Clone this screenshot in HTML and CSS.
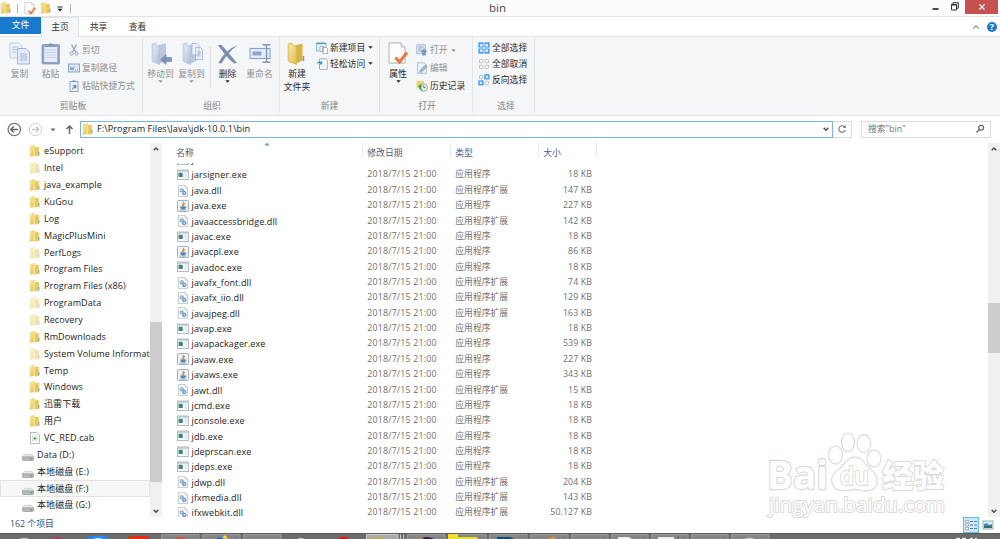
FILE: index.html
```html
<!DOCTYPE html>
<html lang="zh-CN">
<head>
<meta charset="utf-8">
<title>bin</title>
<link rel="stylesheet" href="styles.css">
</head>
<body>
<svg class="defs" aria-hidden="true">
  <defs>
    <linearGradient id="gold" x1="0" x2="1" y1="0" y2="1"><stop offset="0" stop-color="#fbefb0"/><stop offset="1" stop-color="#dfb945"/></linearGradient>
    <linearGradient id="steel" x1="0" x2="1" y1="0" y2="1"><stop offset="0" stop-color="#eaf0f8"/><stop offset="1" stop-color="#a9bbd6"/></linearGradient>
    <symbol id="folder" viewBox="0 0 12 12"><path d="M1.2 1.3 5.6.5V10.6L1.2 11.4Z" fill="url(#gold)" stroke="#dcbd55" stroke-width=".4"/><path d="M5.6 2.2 9.8 1.8V10.9L5.8 11.5 4.4 10Z" fill="#e8c95f"/><path d="M4.2 1.5 6 .6V9.6L7 11.4 4.3 10.8Z" fill="#f4df8b"/><path d="M9.9 6.8v3.6" stroke="#6d9fba" stroke-width="1"/></symbol>
    <symbol id="exe" viewBox="0 0 12 12"><rect x=".5" y="1" width="11" height="9.6" fill="#f7f9fa" stroke="#a5adb4" stroke-width=".8"/><rect x=".6" y="1" width="10.8" height="1.7" fill="#bfc7cd"/><rect x="1.7" y="3.8" width="4" height="4.2" fill="#3c7d80"/><rect x="1.7" y="3.8" width="1.6" height="4.2" fill="#4c9a70"/><path d="M7.5 4h2.8M7.5 6h2.8M7.5 8h2.8" stroke="#cfdae2" stroke-width=".9"/></symbol>
    <symbol id="dll" viewBox="0 0 12 12"><path d="M1.5.5H8L10.5 3V11.5H1.5Z" fill="#fafbfc" stroke="#b5bac0" stroke-width=".7"/><path d="M8 .5V3h2.5" fill="none" stroke="#b5bac0" stroke-width=".6"/><circle cx="4.7" cy="5.3" r="1.5" fill="#d5e5f5" stroke="#6590bf" stroke-width="1.2" stroke-dasharray="1 .3"/><circle cx="7.3" cy="8" r="1.6" fill="#c5daf0" stroke="#4f7fb5" stroke-width="1.2" stroke-dasharray="1 .3"/></symbol>
    <symbol id="java" viewBox="0 0 12 12"><rect x=".5" y=".5" width="11" height="11" rx=".8" fill="#eef3f7" stroke="#8fa2b3" stroke-width=".8"/><path d="M6.3 1.8C7.4 3 4.6 4 5.8 6M7.8 3.3C5.8 4.2 7.5 5 6.4 6.3" fill="none" stroke="#e38a3c" stroke-width="1.1"/><path d="M3.6 6.8h4.8L7.6 9H4.4ZM2.8 10h6.4" fill="#5685ad" stroke="#5685ad" stroke-width=".7"/><path d="M8.3 6.8c1.6 0 1.3 1.3-.4 1.5" fill="none" stroke="#5685ad" stroke-width=".6"/></symbol>
    <symbol id="cab" viewBox="0 0 12 12"><path d="M1.5.5H8L10.5 3V11.5H1.5Z" fill="#fcfcfc" stroke="#a8a8a8" stroke-width=".8"/><rect x="3.4" y="4" width="5" height="4.8" fill="#edf5ed" stroke="#c5d3c5" stroke-width=".5"/><path d="M5.9 5v3M4.4 6.5h3" stroke="#4aa25b" stroke-width="1"/></symbol>
    <symbol id="drive" viewBox="0 0 12 12"><path d="M2.3 4.3H9.8L11.6 7H.4Z" fill="#e6e7e9" stroke="#b8babd" stroke-width=".5"/><path d="M.4 7H11.6V9.6Q11.6 10.4 10.8 10.4H1.2Q.4 10.4.4 9.6Z" fill="#b9bbbe" stroke="#85888c" stroke-width=".6"/><rect x="8.2" y="8.2" width="2" height="1.2" fill="#48b548"/></symbol>
    <symbol id="page-check" viewBox="0 0 20 23"><path d="M1 1H13L17 5V21H1Z" fill="#fdfdfd" stroke="#a5a9ae" stroke-width=".9"/><path d="M13 1V5h4" fill="#e8eaec" stroke="#a5a9ae" stroke-width=".7"/><path d="M7.5 15.5 11.5 20 19 10.5" fill="none" stroke="#e77b45" stroke-width="3.2"/></symbol>
    <symbol id="pages" viewBox="0 0 22 23"><g fill="#eef3fa" stroke="#b4c3dc" stroke-width=".8"><path d="M1 1H10L13 4V16H1Z"/><path d="M8.5 6.5H17L20.5 10V22H8.5Z" fill="#e2ebf7" stroke="#91a5c8"/></g><path d="M3.5 5h6M3.5 7.5h4M3.5 10h4M11 12h7M11 14h7M11 16h7M11 18h7" stroke="#9db2d4" stroke-width=".9"/></symbol>
    <symbol id="clipboard" viewBox="0 0 20 23"><rect x="1" y="2.5" width="17.5" height="19.5" rx="1" fill="#91a3c6" stroke="#8396ba" stroke-width=".7"/><rect x="3.2" y="5" width="13" height="15" fill="#e4edf8"/><path d="M4.5 8h10.5M4.5 10.5h10.5M4.5 13h10.5M4.5 15.5h10.5" stroke="#bccce3" stroke-width=".8"/><path d="M6 5V2.5H8Q9.8-.7 11.5 2.5H13.5V5Z" fill="#8797b7"/></symbol>
    <symbol id="bigfolder" viewBox="0 0 22 23"><path d="M2 2 6 .8V20L2 19Z" fill="#f4dc84" stroke="#d7b350" stroke-width=".5"/><path d="M8 3.5 16.5 1.8V18.5L11 21Z" fill="#dbb246"/><path d="M3 1.5 10.7 5V22.5L3 20Z" fill="url(#gold)" stroke="#d3ae48" stroke-width=".5"/><path d="M17.500 14v5" stroke="#7a9db6" stroke-width="1.4"/></symbol>
    <symbol id="steelfolder" viewBox="0 0 22 23"><path d="M2 2 6 .8V20L2 19Z" fill="#dce5f2" stroke="#b0bfd7" stroke-width=".5"/><path d="M8 3.5 15.5 1.8V18.5L10 21Z" fill="#bac9e0" stroke="#a8b8d0" stroke-width=".5"/><path d="M3 1.5 9.7 5V22.5L3 20Z" fill="url(#steel)" stroke="#a8b8d0" stroke-width=".5"/></symbol>
    <symbol id="caret" viewBox="0 0 5 3"><path d="M.3.2H4.7L2.5 2.8Z" fill="currentColor"/></symbol>
    <symbol id="up" viewBox="0 0 12 12"><path d="M3.700 7.300 6 5 8.300 7.300" fill="none" stroke="#505050" stroke-width="1.5"/></symbol>
    <symbol id="down" viewBox="0 0 12 12"><path d="M3.700 4.900 6 7.200 8.300 4.900" fill="none" stroke="#505050" stroke-width="1.5"/></symbol>
  </defs>
</svg>

<div class="window">
  <header class="titlebar">
    <div class="quick">
      <svg class="i12"><use href="#folder"/></svg><i class="qsep"></i>
      <svg class="qpage"><use href="#page-check"/></svg>
      <svg class="i12"><use href="#folder"/></svg>
      <svg class="qmenu" viewBox="0 0 6 6"><path d="M.5 1h5" stroke="#222"/><path d="M.5 2.8h5L3 5.5Z" fill="#222"/></svg><i class="qsep"></i>
    </div>
    <h1 class="title">bin</h1>
    <div class="controls">
      <svg class="win-icons" viewBox="0 0 35 14"><path d="M2.500 9h6" stroke="#222" stroke-width="1.600"/><path d="M21.500 4.500h5v5.500h-5zM21 5h6M23 4V2.700h5.300V8.200H27" fill="none" stroke="#333" stroke-width="1"/></svg>
      <span class="close"><svg viewBox="0 0 8 8"><path d="M1.400 1.400 6.600 6.600M6.600 1.400 1.400 6.600" stroke="#fff" stroke-width="1.300"/></svg></span>
    </div>
  </header>

  <nav class="tabs">
    <span class="tab file">文件</span><span class="tab active">主页</span><span class="tab">共享</span><span class="tab">查看</span>
    <div class="tabs-right">
      <svg class="chev" viewBox="0 0 8 6"><path d="M1.200 4.700 4 1.800 6.800 4.700" fill="none" stroke="#8b8b8b" stroke-width="1.200"/></svg>
      <span class="help">?</span>
    </div>
  </nav>

  <section class="ribbon">
    <div class="group g-clip">
      <div class="tools">
        <div class="big off"><svg class="bi"><use href="#pages"/></svg><span>复制</span></div>
        <div class="big off"><svg class="bi"><use href="#clipboard"/></svg><span>粘贴</span></div>
        <div class="stack">
          <div class="small off"><svg class="si" viewBox="0 0 12 12"><path d="M3.500.5 7.500 8M8.500.5 4.500 8" stroke="#8ea2c6" stroke-width="1.300"/><circle cx="3.500" cy="9.500" r="1.600" fill="none" stroke="#8ea2c6"/><circle cx="8.500" cy="9.500" r="1.600" fill="none" stroke="#8ea2c6"/></svg>剪切</div>
          <div class="small off"><svg class="si" viewBox="0 0 12 12"><rect x=".5" y="2" width="11" height="8" fill="#dbe6f5" stroke="#8fa4c9"/><path d="M2 4.500 3 8 4 5.500 5 8 6 4.500M7 7.800h1M9 7.800h1" fill="none" stroke="#7187b3" stroke-width=".8"/></svg>复制路径</div>
          <div class="small off"><svg class="si" viewBox="0 0 12 12"><rect x="2" y="1.500" width="8" height="10" fill="#edf3fb" stroke="#8fa4c9"/><path d="M4.500 1.300h3" stroke="#7187b3" stroke-width="1.500"/><path d="M4.300 9 7.400 6M4.800 5.500h3v3" fill="none" stroke="#7187b3" stroke-width="1.100"/></svg>粘贴快捷方式</div>
        </div>
      </div>
      <div class="caption">剪贴板</div>
    </div>
    <div class="group g-org">
      <div class="tools">
        <div class="big off"><svg class="bi" viewBox="0 0 22 23"><use href="#steelfolder"/><path d="M10.500 17.500 16 12.500V15.500H21.500V19.500H16V22.500Z" fill="#8195bb" stroke="#6d82ab" stroke-width=".6"/></svg><span>移动到</span><svg class="caret"><use href="#caret"/></svg></div>
        <div class="big off"><svg class="bi" viewBox="0 0 22 23"><use href="#steelfolder"/><path d="M11 1.500h5l2 2V13h-7ZM14.500 5.500h5l2 2v10h-7Z" fill="#edf3fb" stroke="#9fb1cf" stroke-width=".8"/><path d="M16 10h4M16 12h4M16 14h4" stroke="#9fb1cf" stroke-width=".8"/></svg><span>复制到</span><svg class="caret"><use href="#caret"/></svg></div>
        <i class="vsep"></i>
        <div class="big del"><svg class="bi" viewBox="0 0 22 23"><path d="M1 3.500Q4 2 5.500 4 9 8 12 11.500T20 21L17 21.500Q12 17.500 8.500 13T1 3.500Z" fill="#7d8fae"/><path d="M21 3Q15 7 11 12T4.500 21.500L1.500 21Q4 15 9.500 10T21 3Z" fill="#7d8fae"/></svg><span>删除</span><svg class="caret"><use href="#caret"/></svg></div>
        <div class="big off"><svg class="bi" viewBox="0 0 22 23"><rect x="1" y="6.500" width="20" height="10" fill="#e5edf8" stroke="#8da2c7" stroke-width="1.100"/><rect x="3.500" y="9.500" width="9" height="4" fill="#8fa4c8"/><path d="M13.500 2.800h3l1 1 1-1h3M13.500 20.300h3l1-1 1 1h3M17.500 3.500v16" fill="none" stroke="#8196bd" stroke-width="1.400"/></svg><span>重命名</span></div>
      </div>
      <div class="caption">组织</div>
    </div>
    <div class="group g-new">
      <div class="tools">
        <div class="big"><svg class="bi"><use href="#bigfolder"/></svg><span>新建<br>文件夹</span></div>
        <div class="stack tight">
          <div class="small"><svg class="si" viewBox="0 0 12 12"><rect x=".5" y="1" width="9.500" height="8" fill="#e5f1f8" stroke="#87aec5" stroke-width=".8"/><path d="M.5 1.500H10" stroke="#4f9fc9" stroke-width="1.400"/><path d="M4 4.500h3.500v5H4ZM6.500 5.500h4l1 1v5h-5Z" fill="#fff" stroke="#8499a8" stroke-width=".7"/></svg>新建项目<svg class="caret"><use href="#caret"/></svg></div>
          <div class="small"><svg class="si" viewBox="0 0 12 12"><path d="M3.500.8H10L11.300 2.200V11.300H3.500Z" fill="#fff" stroke="#8e969e" stroke-width=".8"/><path d="M.3 5.800Q2 2.500 5 3.800L6.300 2.400V6.500H2.800L4 5.200Q2.200 4.500.3 5.800" fill="#3f8fd6"/><path d="M5 8h4.500" stroke="#c2c8ce" stroke-width=".7"/></svg>轻松访问<svg class="caret"><use href="#caret"/></svg></div>
        </div>
      </div>
      <div class="caption">新建</div>
    </div>
    <div class="group g-open">
      <div class="tools">
        <div class="big"><svg class="bi"><use href="#page-check"/></svg><span>属性</span><svg class="caret"><use href="#caret"/></svg></div>
        <div class="stack">
          <div class="small off"><svg class="si" viewBox="0 0 12 12"><rect x=".8" y=".8" width="8.500" height="9" fill="#dde6f3" stroke="#a0b2ce" stroke-width=".8"/><path d="M2.500 3h5M2.500 5h3M2.500 7h3" stroke="#8ba0c4" stroke-width=".9"/><path d="M8 4.300 11.500 8H9.800v3.500H6.200V8H4.500Z" fill="#8297bf"/></svg>打开<svg class="caret"><use href="#caret"/></svg></div>
          <div class="small off"><svg class="si" viewBox="0 0 12 12"><path d="M1.500.8H8L10.300 3V11.300H1.500Z" fill="#eef3fa" stroke="#9fb2cf" stroke-width=".8"/><path d="M3.500 10.500 4.200 8 9.800 2.800 11.300 4.500 6 9.800Z" fill="#a4b7d5" stroke="#8197bd" stroke-width=".6"/></svg>编辑</div>
          <div class="small"><svg class="si" viewBox="0 0 12 12"><path d="M.5 1 4 .4 8 1.500V8L3 8.500.5 7.500Z" fill="#efd675"/><circle cx="7.800" cy="7.500" r="3.800" fill="#f2f6f2" stroke="#87938a" stroke-width=".8"/><path d="M7.800 5v2.700h2" fill="none" stroke="#555" stroke-width=".8"/><path d="M1.500 7 4.500 4 6.500 6.800H5Q5 9.200 7 10.500 3 10.500 3 7Z" fill="#35ad3c"/></svg>历史记录</div>
        </div>
      </div>
      <div class="caption">打开</div>
    </div>
    <div class="group g-sel">
      <div class="tools">
        <div class="stack tight">
          <div class="small"><svg class="si" viewBox="0 0 12 12"><path d="M.3.3h11.400v11.400H.3z" fill="#4da3ef"/><path d="M2 2h2.600v2.600H2zM7.400 2H10v2.600H7.400zM2 7.400h2.600V10H2zM7.400 7.400H10V10H7.400z" fill="#d8edff"/><path d="M6 0v12M0 6h12" stroke="#f5f6f7" stroke-width=".8"/></svg>全部选择</div>
          <div class="small"><svg class="si" viewBox="0 0 12 12"><g fill="#fff" stroke="#a8adb2" stroke-width=".8"><rect x="1.500" y="1.500" width="3.300" height="3.300" rx=".8"/><rect x="7.200" y="1.500" width="3.300" height="3.300" rx=".8"/><rect x="1.500" y="7.200" width="3.300" height="3.300" rx=".8"/><rect x="7.200" y="7.200" width="3.300" height="3.300" rx=".8"/></g></svg>全部取消</div>
          <div class="small"><svg class="si" viewBox="0 0 12 12"><g fill="#fff" stroke="#a8adb2" stroke-width=".8"><rect x="1.500" y="1.500" width="3.300" height="3.300" rx=".8"/><rect x="7.200" y="7.200" width="3.300" height="3.300" rx=".8"/></g><path d="M7 1h3.800v3.800H7zM1 7h3.800v3.800H1z" fill="#d8edff" stroke="#4da3ef" stroke-width="1.600"/></svg>反向选择</div>
        </div>
      </div>
      <div class="caption">选择</div>
    </div>
  </section>

  <section class="addressbar">
    <svg class="navs" viewBox="0 0 80 24"><g fill="none"><circle cx="14.300" cy="12.500" r="6.200" stroke="#777" stroke-width="1.300"/><path d="M18 12.500H11M13.800 9.500 10.800 12.500 13.800 15.500" stroke="#666" stroke-width="1.500"/><circle cx="35.500" cy="12.500" r="6.200" stroke="#cfcfcf"/><path d="M32 12.500h6.500M36 9.700 38.800 12.500 36 15.300" stroke="#c8c8c8" stroke-width="1.300"/><path d="M69.500 17V9.500M66.500 12 69.500 9 72.500 12" stroke="#666" stroke-width="1.500"/></g><path d="M50.500 11.500h5L53 14.300Z" fill="#666"/></svg>
    <div class="path"><svg class="i12"><use href="#folder"/></svg><span>F:\Program Files\Java\jdk-10.0.1\bin</span><svg class="i12 drop"><use href="#down"/></svg></div>
    <div class="refresh"><svg viewBox="0 0 12 12"><path d="M9 4.300A3.300 3.300 0 1 0 9.300 7" fill="none" stroke="#777" stroke-width="1.100"/><path d="M9.800 2v3H6.800Z" fill="#777"/></svg></div>
    <div class="search"><span>搜索"bin"</span><svg viewBox="0 0 12 12"><circle cx="7.200" cy="4.800" r="2.400" fill="none" stroke="#666" stroke-width="1.200"/><path d="M5.400 6.600 2.500 9.500" stroke="#666" stroke-width="1.400"/></svg></div>
  </section>

  <main class="content">
    <aside class="tree">
      <div class="node"><svg><use href="#folder"/></svg>eSupport</div>
      <div class="node pale"><svg><use href="#folder"/></svg>Intel</div>
      <div class="node"><svg><use href="#folder"/></svg>java_example</div>
      <div class="node"><svg><use href="#folder"/></svg>KuGou</div>
      <div class="node"><svg><use href="#folder"/></svg>Log</div>
      <div class="node"><svg><use href="#folder"/></svg>MagicPlusMini</div>
      <div class="node pale"><svg><use href="#folder"/></svg>PerfLogs</div>
      <div class="node"><svg><use href="#folder"/></svg>Program Files</div>
      <div class="node"><svg><use href="#folder"/></svg>Program Files (x86)</div>
      <div class="node pale"><svg><use href="#folder"/></svg>ProgramData</div>
      <div class="node pale"><svg><use href="#folder"/></svg>Recovery</div>
      <div class="node"><svg><use href="#folder"/></svg>RmDownloads</div>
      <div class="node pale"><svg><use href="#folder"/></svg>System Volume Informat</div>
      <div class="node"><svg><use href="#folder"/></svg>Temp</div>
      <div class="node"><svg><use href="#folder"/></svg>Windows</div>
      <div class="node"><svg><use href="#folder"/></svg>迅雷下载</div>
      <div class="node"><svg><use href="#folder"/></svg>用户</div>
      <div class="node"><svg><use href="#cab"/></svg>VC_RED.cab</div>
      <div class="node disk"><svg><use href="#drive"/></svg>Data (D:)</div>
      <div class="node disk"><svg><use href="#drive"/></svg>本地磁盘 (E:)</div>
      <div class="node disk selected"><svg><use href="#drive"/></svg>本地磁盘 (F:)</div>
      <div class="node disk"><svg><use href="#drive"/></svg>本地磁盘 (G:)</div>
    </aside>
    <div class="scroll tree-scroll"><svg class="i12"><use href="#up"/></svg><i class="thumb"></i><svg class="i12"><use href="#down"/></svg></div>

    <section class="files">
      <div class="cols head"><span>名称<svg class="sort" viewBox="0 0 6 4"><path d="M.4 3.600 3 .8 5.600 3.600Z" fill="#5b9dbb"/></svg></span><span>修改日期</span><span>类型</span><span>大小</span></div>
      <div class="rows">
        <div class="cols row"><span><svg><use href="#exe"/></svg>jar.exe</span><span>2018/7/15 21:00</span><span>应用程序</span><span>18 KB</span></div>
        <div class="cols row"><span><svg><use href="#exe"/></svg>jarsigner.exe</span><span>2018/7/15 21:00</span><span>应用程序</span><span>18 KB</span></div>
        <div class="cols row"><span><svg><use href="#dll"/></svg>java.dll</span><span>2018/7/15 21:00</span><span>应用程序扩展</span><span>147 KB</span></div>
        <div class="cols row"><span><svg><use href="#java"/></svg>java.exe</span><span>2018/7/15 21:00</span><span>应用程序</span><span>227 KB</span></div>
        <div class="cols row"><span><svg><use href="#dll"/></svg>javaaccessbridge.dll</span><span>2018/7/15 21:00</span><span>应用程序扩展</span><span>142 KB</span></div>
        <div class="cols row"><span><svg><use href="#exe"/></svg>javac.exe</span><span>2018/7/15 21:00</span><span>应用程序</span><span>18 KB</span></div>
        <div class="cols row"><span><svg><use href="#java"/></svg>javacpl.exe</span><span>2018/7/15 21:00</span><span>应用程序</span><span>86 KB</span></div>
        <div class="cols row"><span><svg><use href="#exe"/></svg>javadoc.exe</span><span>2018/7/15 21:00</span><span>应用程序</span><span>18 KB</span></div>
        <div class="cols row"><span><svg><use href="#dll"/></svg>javafx_font.dll</span><span>2018/7/15 21:00</span><span>应用程序扩展</span><span>74 KB</span></div>
        <div class="cols row"><span><svg><use href="#dll"/></svg>javafx_iio.dll</span><span>2018/7/15 21:00</span><span>应用程序扩展</span><span>129 KB</span></div>
        <div class="cols row"><span><svg><use href="#dll"/></svg>javajpeg.dll</span><span>2018/7/15 21:00</span><span>应用程序扩展</span><span>163 KB</span></div>
        <div class="cols row"><span><svg><use href="#exe"/></svg>javap.exe</span><span>2018/7/15 21:00</span><span>应用程序</span><span>18 KB</span></div>
        <div class="cols row"><span><svg><use href="#exe"/></svg>javapackager.exe</span><span>2018/7/15 21:00</span><span>应用程序</span><span>539 KB</span></div>
        <div class="cols row"><span><svg><use href="#java"/></svg>javaw.exe</span><span>2018/7/15 21:00</span><span>应用程序</span><span>227 KB</span></div>
        <div class="cols row"><span><svg><use href="#java"/></svg>javaws.exe</span><span>2018/7/15 21:00</span><span>应用程序</span><span>343 KB</span></div>
        <div class="cols row"><span><svg><use href="#dll"/></svg>jawt.dll</span><span>2018/7/15 21:00</span><span>应用程序扩展</span><span>15 KB</span></div>
        <div class="cols row"><span><svg><use href="#exe"/></svg>jcmd.exe</span><span>2018/7/15 21:00</span><span>应用程序</span><span>18 KB</span></div>
        <div class="cols row"><span><svg><use href="#exe"/></svg>jconsole.exe</span><span>2018/7/15 21:00</span><span>应用程序</span><span>18 KB</span></div>
        <div class="cols row"><span><svg><use href="#exe"/></svg>jdb.exe</span><span>2018/7/15 21:00</span><span>应用程序</span><span>18 KB</span></div>
        <div class="cols row"><span><svg><use href="#exe"/></svg>jdeprscan.exe</span><span>2018/7/15 21:00</span><span>应用程序</span><span>18 KB</span></div>
        <div class="cols row"><span><svg><use href="#exe"/></svg>jdeps.exe</span><span>2018/7/15 21:00</span><span>应用程序</span><span>18 KB</span></div>
        <div class="cols row"><span><svg><use href="#dll"/></svg>jdwp.dll</span><span>2018/7/15 21:00</span><span>应用程序扩展</span><span>204 KB</span></div>
        <div class="cols row"><span><svg><use href="#dll"/></svg>jfxmedia.dll</span><span>2018/7/15 21:00</span><span>应用程序扩展</span><span>143 KB</span></div>
        <div class="cols row"><span><svg><use href="#dll"/></svg>ifxwebkit.dll</span><span>2018/7/15 21:00</span><span>应用程序扩展</span><span>50.127 KB</span></div>
      </div>
      <svg class="watermark" viewBox="0 0 190 95">
        <g class="wm-shape"><ellipse cx="74.500" cy="28" rx="7" ry="9"/><ellipse cx="87" cy="15.500" rx="6.500" ry="9.300"/><ellipse cx="103" cy="16.500" rx="6.800" ry="9"/><ellipse cx="113" cy="31.500" rx="7" ry="8.500"/><path d="M94 30C86 30 84 38 77 43C67 49 69 63 82 63.500C87 63.800 89 62.500 94 62.500C99 62.500 102 64.500 108 63.500C119 61.500 118 49 111 43.500C104 38 102 30 94 30Z"/></g>
        <g class="wm-text"><text x="6" y="62" font-size="40" textLength="61" lengthAdjust="spacingAndGlyphs" font-weight="700" stroke-width="2.400">Bai</text><text x="79" y="57.500" font-size="25" textLength="29" lengthAdjust="spacingAndGlyphs" font-weight="600">du</text><text x="121" y="60" font-size="31" textLength="62" lengthAdjust="spacingAndGlyphs" font-weight="900">经验</text><text x="8" y="85" font-size="20" textLength="176" lengthAdjust="spacingAndGlyphs">jingyan.baidu.com</text></g>
      </svg>
    </section>
    <div class="scroll file-scroll"><svg class="i12"><use href="#up"/></svg><i class="thumb"></i><svg class="i12"><use href="#down"/></svg></div>
  </main>

  <footer class="status">
    <span>162 个项目</span>
    <div class="views">
      <span class="view on"><svg viewBox="0 0 14 14"><path d="M1.500 2.500h3v2h-3zM1.500 6h3v2h-3zM1.500 9.500h3v2h-3z" fill="#fff" stroke="#8a98a5" stroke-width=".7"/><path d="M6 3.500h3M10 3.500h3M6 7h3M10 7h3M6 10.500h3M10 10.500h3" stroke="#5d7e95"/></svg></span>
      <span class="view"><svg viewBox="0 0 14 14"><rect x="2" y="3" width="10" height="8" fill="#dff0fb" stroke="#8d9aa5" stroke-width=".8"/><path d="M3 6 6 5 8 7 11 6V8H3Z" fill="#3f8fc5"/><path d="M3 8h8v2H3z" fill="#356f63"/></svg></span>
    </div>
  </footer>

  <svg class="taskbar" viewBox="0 0 1000 6">
    <path d="M0 .5H1000" stroke="#5c5c5c"/>
    <g fill="#858585" stroke="#a5a5a5" stroke-width=".8"><path d="M161.500 7V1.500H199V7M202.500 7V1.500H240V7M243.500 7V1.500H281V7M407.500 7V1.500H445V7M448.500 7V1.500H486V7M489.500 7V1.500H527V7M530.500 7V1.500H568V7M571.500 7V1.500H608V7M611.500 7V1.500H648V7M651.500 7V1.500H688V7M691.500 7V1.500H728V7M731.500 7V1.500H769V7"/><path d="M366.500 7V1.500H398V7M400.500 7V1.500M403.500 7V1.500" fill="#aaa" stroke="#ddd"/></g>
    <path d="M19 6Q23 4 28 5V6ZM298 5Q301 4 305 6H298Z" fill="#bbb"/><path d="M53 6Q58 3 63 6Z" fill="#dc1954"/><path d="M87 6Q88 3 93 3H104Q108 3 109 6Z" fill="#2787f5"/><path d="M93 6Q98 4 103 6Z" fill="#d8eaff"/><path d="M128 6Q128 3 132 3H146Q150 3 150 6Z" fill="#e32b0e"/><path d="M174 6Q180 2 187 6Z" fill="#dc4a3a"/><path d="M216 6Q220 2.500 225 6Z" fill="#1967cd"/><path d="M222 5 225 2 228 6Z" fill="#ffdf2f"/><path d="M337 6Q344 1 350 6Z" fill="#e3131e"/><path d="M372 6V4.500H383V6Z" fill="#c7aa54"/><path d="M420 6Q427 2 434 6Z" fill="#272147"/><path d="M418 6 424 4 422 6Z" fill="#ee8622"/><path d="M448 1H458V4H476Q478 4 478 6H448Z" fill="#f2df28"/><path d="M497 4H508Q512 4 514 6H497Z" fill="#064d7b"/><path d="M548 6 556 3 554 6Z" fill="#f39a29"/><path d="M618 6V4H629L632 6ZM658 6V4H674V6Z" fill="#eee"/><path d="M677 4h2" stroke="#b23131"/><path d="M744 6Q749 3 755 6Z" fill="#c4c8bb"/><path d="M956 5.300h4M962 5.300h4M970 5.300h3M975 5.300h2" stroke="#e6e6e6" stroke-width="1.200"/>
  </svg>
</div>
</body>
</html>
```

FILE: styles.css
```css
* { box-sizing: border-box; }
body {
  margin: 0;
  font-family: "Open Sans", "Noto Sans CJK SC", sans-serif;
  font-size: 8.8px;
  line-height: 12px;
  color: #222;
  background: #fff;
  overflow: hidden;
}
svg { flex: none; display: block; }
.defs { position: absolute; width: 0; height: 0; }
.i12 { width: 12px; height: 12px; }
.window { display: flex; flex-direction: column; width: 1000px; height: 539px; }

/* Title bar */
.titlebar { display: grid; grid-template-columns: 1fr 60px 1fr; height: 17px; background: #fcfcfc; border-bottom: 1px solid #e2e2e2; }
.quick { display: flex; align-items: center; }
.quick .i12 { margin-top: -1px; }
.qsep { width: 1px; height: 9px; background: #b5b5b5; margin: 0 6px 0 5px; }
.qpage { width: 12px; height: 13px; margin-right: 4px; }
.qmenu { width: 6px; height: 6px; margin: 2px 2px 0 5px; }
.title { margin: 0; padding-left: 19px; font-size: 11.5px; font-weight: 400; line-height: 16px; color: #444; }
.controls { display: flex; justify-content: flex-end; padding-right: 2px; }
.win-icons { width: 35px; height: 14px; }
.close { display: flex; align-items: center; justify-content: center; width: 33px; height: 14px; background: #c75050; }
.close svg { width: 8px; height: 8px; }

/* Tabs */
.tabs { display: flex; height: 20px; border-bottom: 1px solid #e2e3e4; line-height: 20px; color: #333; }
.tab { width: 39px; text-align: center; }
.tab.file { width: 41px; height: 17px; background: #1979ca; color: #fff; line-height: 17px; }
.tab.active { width: 38px; height: 20px; background: #f5f6f7; border: 1px solid #e2e3e4; border-bottom: 0; line-height: 18px; }
.tabs-right { display: flex; align-items: center; gap: 7px; margin-left: auto; padding-right: 3px; }
.chev { width: 8px; height: 6px; }
.help { width: 10px; height: 10px; border-radius: 50%; background: #1979ca; color: #fff; font-size: 9px; font-weight: 700; line-height: 10px; text-align: center; }

/* Ribbon */
.ribbon { display: flex; height: 79px; padding-top: 1px; background: #f5f6f7; border-bottom: 1px solid #e3e4e5; }
.group { display: flex; flex-direction: column; height: 75px; border-right: 1px solid #e2e3e5; color: #2b2b2b; white-space: nowrap; }
.tools { display: flex; flex: none; height: 60px; }
.caption { margin-top: 1px; text-align: center; color: #858585; line-height: 14px; }
.g-clip { width: 143px; padding-left: 4px; }
.g-org { width: 137px; padding-left: 2px; }
.g-new { width: 100px; }
.g-open { width: 93px; padding-left: 2px; }
.g-sel { width: 62px; padding-left: 5px; }
.big { display: flex; flex-direction: column; align-items: center; width: 31px; padding-top: 3.5px; line-height: 13px; text-align: center; }
.bi { width: 22px; height: 23px; margin-bottom: 3px; }
.caret { width: 5px; height: 3px; }
.big .caret { margin-top: -1px; }
.off { color: #919191; }
.big.del { width: 33px; }
.vsep { width: 1px; height: 42px; margin: 8px 0 0 3px; background: #dfe0e2; }
.stack { display: flex; flex-direction: column; gap: 6px; padding: 6px 0 0 2px; }
.stack.tight { gap: 4.3px; padding-top: 3.5px; }
.small { display: flex; align-items: center; gap: 2px; height: 12px; }
.small .caret { margin-left: 1px; }
.si { width: 12px; height: 12px; }
.g-new .big { width: 34px; }
.g-open .big { width: 32px; }
.g-sel .stack { padding-left: 0; }

/* Address row */
.addressbar { display: flex; align-items: center; height: 26px; }
.navs { width: 80px; height: 24px; }
.path { display: flex; align-items: center; width: 753px; height: 17px; border: 1px solid #7eb4e2; padding-left: 1px; font-size: 9.2px; letter-spacing: .05px; }
.path span { margin-left: 3px; }
.path .drop { margin-left: auto; }
.refresh { display: flex; align-items: center; justify-content: center; width: 19px; height: 17px; border: 1px solid #dcdcdc; border-left: 0; }
.refresh svg { width: 12px; height: 12px; }
.search { display: flex; align-items: center; justify-content: space-between; width: 130px; height: 17px; margin-left: 9px; padding: 0 4px 0 6px; border: 1px solid #dcdcdc; color: #707070; }
.search svg { width: 12px; height: 12px; }

/* Panes */
.content { display: flex; height: 375px; }
.tree { width: 150px; height: 375px; padding-top: 1px; overflow: hidden; font-size: 9px; letter-spacing: .1px; }
.node { display: flex; align-items: center; gap: 3px; height: 16.86px; padding-left: 29px; white-space: nowrap; }
.node svg { width: 12px; height: 12px; }
.node.disk { padding-left: 22px; }
.node.disk svg { margin-top: 3px; }
.node.pale svg { opacity: .5; }
.node.selected { background: #f7f7f7; box-shadow: inset 0 0 0 1px #e2e2e2; }
.scroll { display: flex; flex-direction: column; align-items: center; width: 12px; height: 374px; margin-top: 1px; background: #f0f0f0; }
.scroll .thumb { width: 100%; background: #cdcdcd; }
.tree-scroll .thumb { height: 160px; margin: 167px 0 23px; }
.file-scroll .thumb { height: 50px; margin: 148px 0 152px; }

.files { position: relative; display: flex; flex-direction: column; width: 826px; height: 375px; padding-left: 10px; }
.cols { display: grid; grid-template-columns: 191px 88px 88px 58px; }
.cols > span { white-space: nowrap; }
.head { height: 20.5px; flex: none; line-height: 22px; color: #4c607a; }
.head > span { position: relative; padding-left: 4.3px; border-right: 1px solid #e6eff8; height: 15px; }
.sort { position: absolute; left: 92px; top: 0; width: 6px; height: 4px; }
.rows { height: 354.5px; overflow: hidden; }
.rows .row:first-child { margin-top: -10.4px; }
.row { height: 15.36px; line-height: 15.36px; color: #6f6f6f; }
.row > span { padding-left: 4.3px; }
.row > span:first-child { display: flex; align-items: center; gap: 2.5px; padding-left: 5px; color: #222; font-size: 9px; letter-spacing: .12px; }
.row > span:nth-child(2) { letter-spacing: .2px; }
.row svg { width: 12px; height: 12px; }
.row > span:last-child { padding: 0 5px 0 0; text-align: right; letter-spacing: .1px; }
.watermark { position: absolute; left: 599px; top: 285px; width: 190px; height: 95px; }
.wm-shape { fill: #fff; stroke: #dedede; stroke-width: 1.3; }
.wm-text { fill: #fff; stroke: #dadada; stroke-width: 2; paint-order: stroke; stroke-linejoin: round; }

/* Status and task bars */
.status { display: flex; justify-content: space-between; height: 16px; padding: 0 4px 0 10px; line-height: 15px; color: #3a5475; }
.views { display: flex; gap: 1px; }
.view { display: flex; align-items: center; justify-content: center; width: 16px; height: 16px; }
.view.on { background: #cbe8f6; box-shadow: inset 0 0 0 1px #63bfe8; }
.view svg { width: 14px; height: 14px; }
.taskbar { width: 1000px; height: 6px; background: #6b6b6b; }
```
